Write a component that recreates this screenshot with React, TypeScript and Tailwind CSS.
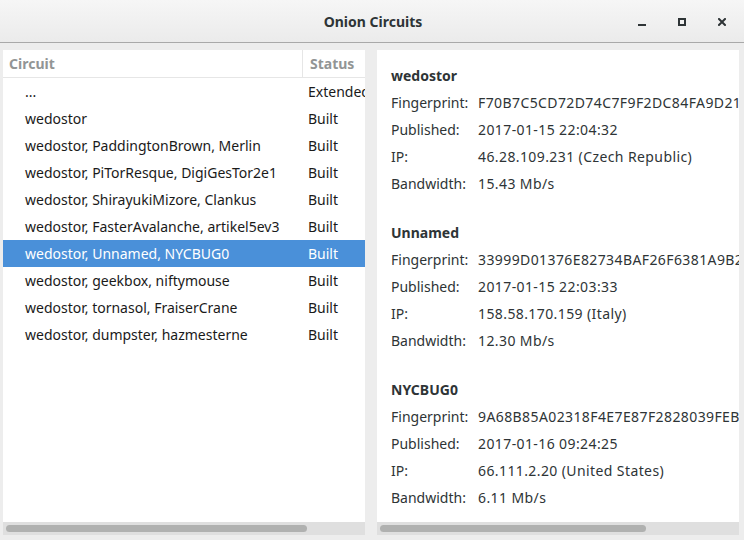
import React from 'react'

const circuits = [
  { path: '...', status: 'Extended' },
  { path: 'wedostor', status: 'Built' },
  { path: 'wedostor, PaddingtonBrown, Merlin', status: 'Built' },
  { path: 'wedostor, PiTorResque, DigiGesTor2e1', status: 'Built' },
  { path: 'wedostor, ShirayukiMizore, Clankus', status: 'Built' },
  { path: 'wedostor, FasterAvalanche, artikel5ev3', status: 'Built' },
  { path: 'wedostor, Unnamed, NYCBUG0', status: 'Built', selected: true },
  { path: 'wedostor, geekbox, niftymouse', status: 'Built' },
  { path: 'wedostor, tornasol, FraiserCrane', status: 'Built' },
  { path: 'wedostor, dumpster, hazmesterne', status: 'Built' },
]

const relays = [
  {
    name: 'wedostor',
    fingerprint: 'F70B7C5CD72D74C7F9F2DC84FA9D21A4C5E3B7F0',
    published: '2017-01-15 22:04:32',
    ip: '46.28.109.231 (Czech Republic)',
    bandwidth: '15.43 Mb/s',
  },
  {
    name: 'Unnamed',
    fingerprint: '33999D01376E82734BAF26F6381A9B2C07D4E511',
    published: '2017-01-15 22:03:33',
    ip: '158.58.170.159 (Italy)',
    bandwidth: '12.30 Mb/s',
  },
  {
    name: 'NYCBUG0',
    fingerprint: '9A68B85A02318F4E7E87F2828039FEB0D2C4A196',
    published: '2017-01-16 09:24:25',
    ip: '66.111.2.20 (United States)',
    bandwidth: '6.11 Mb/s',
  },
]

function Scrollbar({ thumb }: { thumb: string }) {
  return (
    <div className="h-[13px] bg-[#dfdfdf] flex items-center px-[3px]">
      <div className={`h-[7px] rounded-full bg-[#b0b1b0] ${thumb}`} />
    </div>
  )
}

function Field({ label, value }: { label: string; value: string }) {
  return (
    <div className="h-[27px] flex items-center">
      <span className="w-[87px] shrink-0">{label}</span>
      <span className="tracking-[0.4px]">{value}</span>
    </div>
  )
}

export default function App() {
  return (
    <div
      className="w-[744px] h-[540px] bg-[#ededed] flex flex-col overflow-hidden text-[14px]"
      style={{ fontFamily: '"Noto Sans", "Open Sans", sans-serif' }}
    >
      <header className="h-[43px] shrink-0 border-b border-[#a9a9a9] bg-gradient-to-b from-[#f6f6f6] to-[#ebebeb] flex items-center relative">
        <div className="flex-1 text-center font-bold text-[#2e3436] pl-[2px]">Onion Circuits</div>
        <div className="absolute right-[18px] top-0 h-full flex items-center gap-[32px] text-[#2e3436]">
          <svg width="8" height="8" viewBox="0 0 8 8" className="mt-[1px]">
            <rect x="0" y="6" width="8" height="2" fill="currentColor" />
          </svg>
          <svg width="8" height="8" viewBox="0 0 8 8" className="mt-[1px]">
            <rect x="1" y="1" width="6" height="6" fill="none" stroke="currentColor" strokeWidth="2" />
          </svg>
          <svg width="8" height="8" viewBox="0 0 8 8" className="mt-[1px]">
            <path d="M1 1 L7 7 M7 1 L1 7" stroke="currentColor" strokeWidth="2" strokeLinecap="square" />
          </svg>
        </div>
      </header>

      <main className="flex-1 flex pt-[7px] pb-[5px] pl-[3px] pr-[5px] gap-[12px] min-h-0">
        <section className="w-[362px] bg-white flex flex-col">
          <div className="h-[28px] flex border-b border-[#e6e6e6] font-bold text-[#929595] shrink-0">
            <div className="w-[300px] pl-[6px] flex items-center border-r border-[#e6e6e6]">Circuit</div>
            <div className="flex-1 pl-[7px] flex items-center">Status</div>
          </div>
          <div className="flex-1 min-h-0">
            {circuits.map((c, i) => (
              <div
                key={i}
                className={`h-[27px] flex items-center whitespace-nowrap overflow-hidden ${
                  c.selected ? 'bg-[#4a90d9] text-white' : 'text-[#1a1a1a]'
                }`}
              >
                <div className="w-[300px] pl-[22px]">{c.path}</div>
                <div className="flex-1 pl-[5px] overflow-hidden">{c.status}</div>
              </div>
            ))}
          </div>
          <Scrollbar thumb="w-[301px]" />
        </section>

        <section className="w-[362px] bg-white flex flex-col">
          <div className="flex-1 min-h-0 overflow-hidden pl-[14px] pt-[12px] text-[#2e3436] whitespace-nowrap">
            {relays.map((r, i) => (
              <div key={r.name} className={i > 0 ? 'mt-[22px]' : ''}>
                <div className="h-[27px] flex items-center font-bold">{r.name}</div>
                <Field label="Fingerprint:" value={r.fingerprint} />
                <Field label="Published:" value={r.published} />
                <Field label="IP:" value={r.ip} />
                <Field label="Bandwidth:" value={r.bandwidth} />
              </div>
            ))}
          </div>
          <Scrollbar thumb="w-[266px]" />
        </section>
      </main>
    </div>
  )
}
